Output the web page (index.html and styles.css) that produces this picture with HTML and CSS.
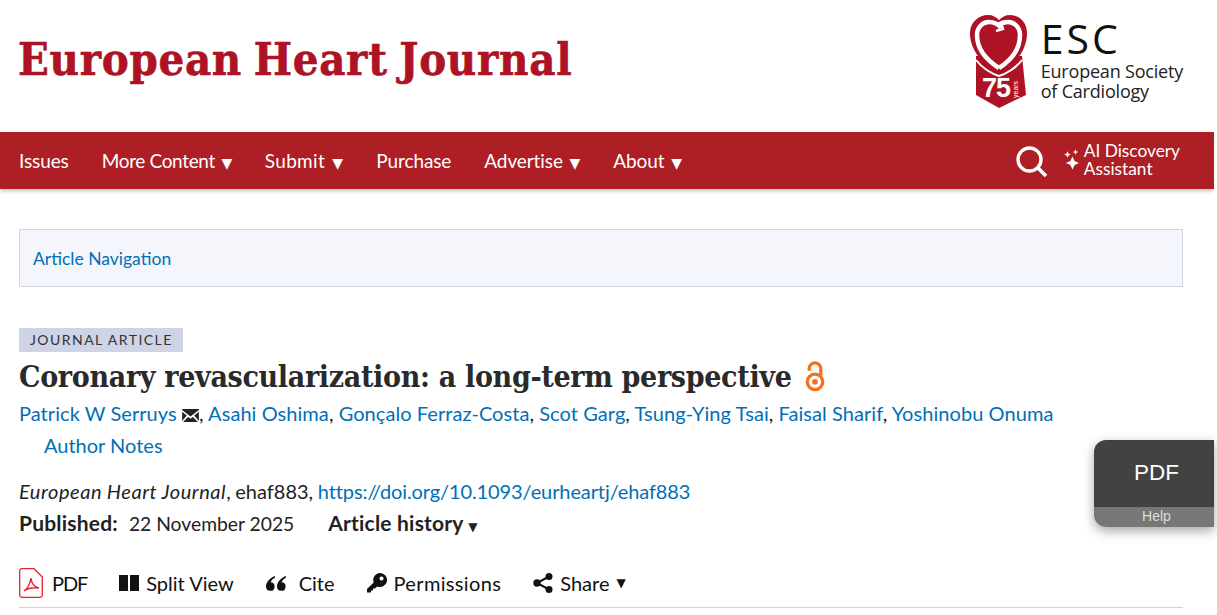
FILE: index.html
```html
<!DOCTYPE html>
<html lang="en">
  <head>
    <meta charset="UTF-8" />
    <meta name="viewport" content="width=device-width, initial-scale=1.0" />
    <title>Coronary revascularization: a long-term perspective</title>
    <link rel="stylesheet" href="styles.css">
  </head>
  <body>
    <header class="masthead">
      <a class="journal-name" href="#">European Heart Journal</a>
      <div class="esc-logo">
        <svg class="esc-mark" viewBox="0 0 58 94" width="58" height="94" aria-hidden="true">
          <path d="M6 42 L6 81 L29 94 L56 81 L52 42 Z" fill="#ae1325" />
          <path d="M29 60 C12 50 0 36 0 19 C0 8 9 1 18 1 C23 1 26 3 29 6 C32 3 35 1 40 1 C49 1 57 8 57 19 C57 36 46 50 29 60 Z" fill="#ae1325" />
          <path d="M6 46 C12 54 22 60 29 62 C36 60 46 54 52 46" fill="none" stroke="#fff" stroke-width="2" />
          <path d="M29 54 C18 47 7 36 7 21 C7 13 13 8 19 8 C24 8 28 10 31 14" fill="none" stroke="#fff" stroke-width="4.5" />
          <path d="M29 54 C40 47 50 36 50 21 C50 13 44 8 38 8 C34 8 31 9 28 11" fill="none" stroke="#fff" stroke-width="4.5" />
          <path d="M31 8 L33 15 L26 17" fill="none" stroke="#fff" stroke-width="2.5" />
          <text class="esc-years" x="12" y="83">75</text>
          <text class="esc-years-small" transform="translate(48 84) rotate(-90)">years</text>
        </svg>
        <div class="esc-words">
          <div class="esc-abbr">ESC</div>
          <div class="esc-full">European Society<br />of Cardiology</div>
        </div>
      </div>
    </header>

    <nav class="main-nav">
      <ul class="nav-links">
        <li><a href="#">Issues</a></li>
        <li><a class="nav-tight" href="#">More Content <span class="caret">▼</span></a></li>
        <li><a class="nav-wide" href="#">Submit <span class="caret">▼</span></a></li>
        <li><a href="#">Purchase</a></li>
        <li><a href="#">Advertise <span class="caret">▼</span></a></li>
        <li><a href="#">About <span class="caret">▼</span></a></li>
      </ul>
      <svg class="search-icon" viewBox="0 0 32 32" width="32" height="32" aria-hidden="true">
        <circle cx="13.5" cy="13.5" r="11.5" fill="none" stroke="#fff" stroke-width="3.4" />
        <path d="M21.5 21.5 L30 30" fill="none" stroke="#fff" stroke-width="3.6" />
      </svg>
      <a class="ai-link" href="#">
        <svg viewBox="0 0 18 26" width="18" height="26" aria-hidden="true">
          <path d="M8.5 9.5 L10.6 13.9 L15 16 L10.6 18.1 L8.5 22.5 L6.4 18.1 L2 16 L6.4 13.9 Z" fill="#fff" />
          <path d="M3.5 4.2 L4.5 6.5 L6.8 7.5 L4.5 8.5 L3.5 10.8 L2.5 8.5 L.2 7.5 L2.5 6.5 Z" fill="#fff" />
          <path d="M11.5 2.3 L12.3 4.2 L14.2 5 L12.3 5.8 L11.5 7.7 L10.7 5.8 L8.8 5 L10.7 4.2 Z" fill="#fff" />
        </svg>
        <span>AI Discovery<br />Assistant</span>
      </a>
    </nav>

    <main class="page">
      <div class="article-nav"><a href="#">Article Navigation</a></div>

      <div class="article-type">JOURNAL ARTICLE</div>
      <h1 class="article-title">
        Coronary revascularization: a long-term perspective
        <svg class="oa-icon" viewBox="0 0 20 32" width="20" height="31" aria-hidden="true">
          <path d="M4 10 L4 8 A6 6 0 0 1 16 8 L16 15" fill="none" stroke="#f4711f" stroke-width="3.4" />
          <circle cx="10" cy="21.5" r="8" fill="none" stroke="#f4711f" stroke-width="3.4" />
          <circle cx="10" cy="21.5" r="3" fill="#f4711f" />
        </svg>
      </h1>

      <div class="authors">
        <a href="#">Patrick W Serruys</a>
        <svg class="mail-icon" viewBox="0 0 18 14" width="17" height="13" aria-hidden="true">
          <path d="M0 1 L9 8 L18 1 L18 0 L0 0 Z M0 3 L0 13 L5 7 Z M18 3 L18 13 L13 7 Z M1 14 L6.5 8.5 L9 10.5 L11.5 8.5 L17 14 Z" fill="#222" />
        </svg>,
        <a href="#">Asahi Oshima</a>,
        <a href="#">Gonçalo Ferraz-Costa</a>,
        <a href="#">Scot Garg</a>,
        <a href="#">Tsung-Ying Tsai</a>,
        <a href="#">Faisal Sharif</a>,
        <a href="#">Yoshinobu Onuma</a>
      </div>
      <div class="author-notes"><a href="#">Author Notes</a></div>

      <div class="citation">
        <em>European Heart Journal</em>, ehaf883,
        <a class="doi-link" href="#">https://doi.org/10.1093/eurheartj/ehaf883</a>
      </div>
      <div class="pub-history">
        <span><b>Published:</b><span class="pub-date">22 November 2025</span></span>
        <b>Article history <span class="caret-small">▼</span></b>
      </div>

      <div class="toolbar">
        <a href="#" class="tool tool-pdf">
          <svg viewBox="0 0 24 30" width="24" height="30" aria-hidden="true">
            <path d="M2.5 .7 H15 L23.3 9 V27 A2.3 2.3 0 0 1 21 29.3 H3 A2.3 2.3 0 0 1 .7 27 V3 A2.3 2.3 0 0 1 2.5 .7 Z" fill="#fff" stroke="#e8222e" stroke-width="1.3" />
            <path d="M5 23 C8 21 11 16 12 10 C12.5 15 15 19 20 20 C15 19.5 9 20 5 23 Z" fill="none" stroke="#e8222e" stroke-width="1.5" />
          </svg>
          PDF
        </a>
        <a href="#" class="tool tool-split">
          <svg viewBox="0 0 20 16" width="20" height="16" aria-hidden="true">
            <path d="M0 0 H9 V16 H0 Z M11 0 H20 V16 H11 Z" fill="#111" />
          </svg>
          Split View
        </a>
        <a href="#" class="tool tool-cite">
          <svg viewBox="0 0 20 15" width="20" height="15" aria-hidden="true">
            <path d="M9 0 C4 2 0 6 0 10.5 A4.3 4.3 0 1 0 4.5 6.2 C5.5 4 7 2.5 9 1.4 Z M20 0 C15 2 11 6 11 10.5 A4.3 4.3 0 1 0 15.5 6.2 C16.5 4 18 2.5 20 1.4 Z" fill="#111" />
          </svg>
          Cite
        </a>
        <a href="#" class="tool tool-perm">
          <svg viewBox="0 0 20 20" width="20" height="20" aria-hidden="true">
            <path fill-rule="evenodd" d="M13 0 A7 7 0 1 1 10.2 13.4 L8 15.5 H6 V17.5 H4 V19.5 H0 V16 L6.7 9.6 A7 7 0 0 1 13 0 Z M14.5 3.5 A2 2 0 1 0 14.6 3.5 Z" fill="#111" />
          </svg>
          Permissions
        </a>
        <a href="#" class="tool tool-share">
          <svg viewBox="0 0 20 20" width="20" height="20" aria-hidden="true">
            <path d="M16 3.5 L4 10 L16 16.5" fill="none" stroke="#111" stroke-width="2" />
            <circle cx="16" cy="3.5" r="3.5" fill="#111" />
            <circle cx="4" cy="10" r="3.7" fill="#111" />
            <circle cx="16" cy="16.5" r="3.5" fill="#111" />
          </svg>
          Share <span class="caret-small">▼</span>
        </a>
      </div>
    </main>

    <aside class="pdf-help">
      <div class="pdf-help-main">PDF</div>
      <div class="pdf-help-foot">Help</div>
    </aside>
  </body>
</html>
```

FILE: styles.css
```css
html {
  overflow: hidden;
}
body {
  background-color: white;
  font-family: "Lato", sans-serif;
  margin: 0;
  width: 1214px;
  height: 615px;
  overflow: hidden;
  color: #222;
  font-size: 20px;
}
a {
  color: #006fb7;
  text-decoration: none;
}
.masthead {
  height: 132px;
  display: flex;
  justify-content: space-between;
  align-items: flex-start;
  padding: 0 31px 0 18px;
}
.journal-name {
  font-family: "DejaVu Serif Condensed", "DejaVu Serif", serif;
  font-weight: 700;
  font-size: 45px;
  line-height: 56px;
  margin-top: 32px;
  letter-spacing: .7px;
  word-spacing: -3px;
  -webkit-text-stroke: .6px #ae1325;
  color: #ae1325;
}
.esc-logo {
  display: flex;
  gap: 13px;
  margin-top: 14px;
}
.esc-years {
  font-family: "Liberation Sans", sans-serif;
  font-weight: 700;
  font-size: 27px;
  letter-spacing: -1px;
  fill: #fff;
}
.esc-years-small {
  font-family: "Liberation Sans", sans-serif;
  font-size: 7px;
  fill: #fff;
}
.esc-abbr {
  font-family: "Open Sans", sans-serif;
  font-size: 41px;
  line-height: 46px;
  letter-spacing: 3px;
  color: #111;
  margin-top: 1px;
}
.esc-full {
  font-family: "Open Sans", sans-serif;
  font-size: 18px;
  line-height: 20px;
  letter-spacing: -.2px;
  color: #222;
}
.main-nav {
  height: 57px;
  box-sizing: border-box;
  background-color: #ae1f25;
  box-shadow: 0 2px 4px rgba(0, 0, 0, .25);
  display: flex;
  align-items: center;
  padding: 0 34px 2px 19px;
}
.nav-links {
  display: flex;
  gap: 33px;
  list-style: none;
  margin: 0;
  padding: 0;
  flex: 1;
}
.nav-links a {
  color: white;
  font-size: 19px;
  letter-spacing: -.1px;
}
.nav-links a.nav-tight {
  letter-spacing: -.35px;
}
.nav-links a.nav-wide {
  letter-spacing: .3px;
}
.caret {
  font-size: 14px;
  margin-left: 2px;
  font-family: "DejaVu Sans", sans-serif;
}
.search-icon {
  margin: 4px 16px 0 0;
}
.ai-link {
  display: flex;
  align-items: center;
  gap: 2px;
  color: white;
  font-size: 17.3px;
  line-height: 18px;
}
.page {
  padding: 40px 31px 0 19px;
}
.article-nav {
  height: 58px;
  box-sizing: border-box;
  padding: 0 13px;
  display: flex;
  align-items: center;
  background-color: #f5f6fb;
  border: 1px solid #cfd4e5;
  font-size: 17.5px;
}
.article-type {
  width: 164px;
  height: 24px;
  box-sizing: border-box;
  margin-top: 41px;
  padding-left: 11px;
  background-color: #ced3e5;
  font-size: 14px;
  line-height: 24px;
  letter-spacing: 1.45px;
  color: #333;
}
.article-title {
  font-family: "DejaVu Serif Condensed", "DejaVu Serif", serif;
  font-size: 30px;
  font-weight: 700;
  line-height: 50px;
  letter-spacing: -.32px;
  margin: 0;
  color: #2a2a2a;
  display: flex;
  align-items: center;
  gap: 13px;
  height: 49px;
}
.authors {
  line-height: 24px;
  letter-spacing: .06px;
}
.mail-icon {
  margin: 0 0 -1px 0;
}
.author-notes {
  margin: 8px 0 0 25px;
  line-height: 24px;
}
.citation {
  margin-top: 22px;
  line-height: 24px;
  word-spacing: -.5px;
}
.citation em {
  letter-spacing: .55px;
}
.doi-link {
  letter-spacing: -.1px;
}
.pub-history {
  margin-top: 8px;
  height: 24px;
  line-height: 24px;
  display: flex;
  gap: 34px;
}
.pub-history b {
  font-size: 21px;
  letter-spacing: .2px;
}
.pub-date {
  margin-left: 11px;
  font-size: 19.3px;
}
.caret-small {
  font-size: 12px;
  font-family: "DejaVu Sans", sans-serif;
}
.toolbar {
  margin-top: 24px;
  height: 49px;
  box-sizing: border-box;
  border-bottom: 1px solid #cfd4e5;
  display: flex;
  align-items: center;
  gap: 32px;
}
.tool {
  display: flex;
  align-items: center;
  gap: 7px;
  color: #111;
}
.tool-pdf {
  gap: 9px;
  letter-spacing: -1.1px;
}
.tool-cite {
  gap: 13px;
}
.tool-perm {
  letter-spacing: .35px;
}
.pdf-help {
  position: absolute;
  left: 1094px;
  top: 440px;
  width: 120px;
  height: 87px;
  border-radius: 12px 0 0 12px;
  overflow: hidden;
  box-shadow: 0 4px 12px rgba(0, 0, 0, .35);
  font-family: "Liberation Sans", sans-serif;
  text-align: center;
  display: flex;
  flex-direction: column;
}
.pdf-help-main {
  flex: 1;
  padding-left: 5px;
  background-color: #424242;
  color: white;
  font-size: 22.5px;
  line-height: 66px;
}
.pdf-help-foot {
  height: 20px;
  padding-left: 5px;
  background-color: #777;
  color: #ddd;
  font-size: 14px;
  line-height: 18px;
}
```
